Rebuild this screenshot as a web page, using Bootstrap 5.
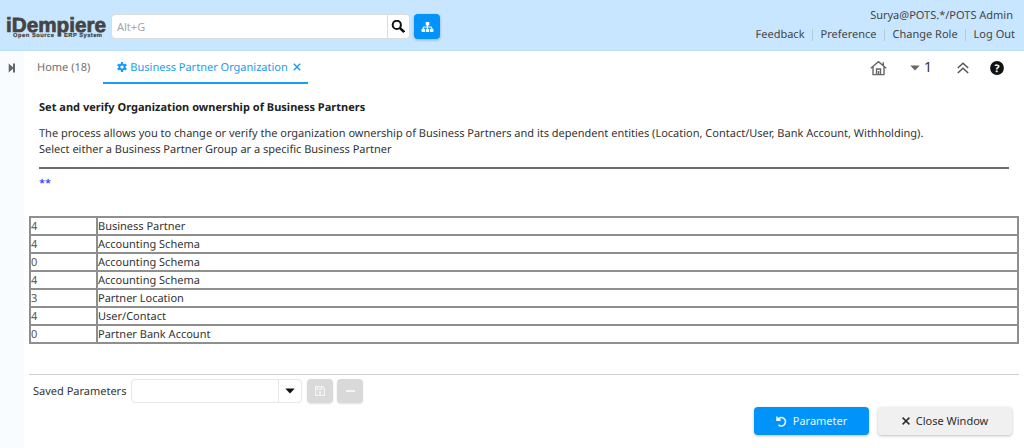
<!DOCTYPE html>
<html lang="en">
<head>
<meta charset="utf-8">
<meta name="viewport" content="width=device-width, initial-scale=1">
<title>iDempiere - Business Partner Organization</title>
<link href="https://cdn.jsdelivr.net/npm/bootstrap@5.3.0/dist/css/bootstrap.min.css" rel="stylesheet">
<style>
body{font-family:"Noto Sans",sans-serif;font-size:11px;line-height:16px;color:#333;height:448px;overflow:hidden;background:#fff;text-rendering:geometricPrecision}
svg{display:block;flex:none}
.topbar{height:51px;background:#c8e6ff;border-bottom:1px solid #b9e0fb}
.logo{margin-left:6px}
.search{width:299px;height:25px;margin:14px 0 0 4px}
.search .form-control{font-size:11px;line-height:16px;padding:0 5px;border:1px solid #dcdcdc;border-radius:4px 0 0 4px}
.search .form-control::placeholder{color:#a8a8a8;opacity:1}
.search-btn{width:24px;background:#fff;border:1px solid #dcdcdc;border-left:0;border-radius:0 4px 4px 0}
.tree-btn{width:26px;height:25px;margin:14px 0 0 4px;background:#0093f9;border-radius:4px;box-shadow:0 1px 3px rgba(0,0,0,.25)}
.user-area{color:#444;padding:8px 9px 0 0}
.user-area .who{padding-right:2px}
.user-area .links{margin-top:3px}
.user-area .links span+span{border-left:1px solid #b4cbdd;line-height:12px;margin-left:7px;padding-left:8px}
.side{width:24px;background:#f8fcff;padding:12px 0 0 8px}
.tabs{height:33px}
.tab-home{color:#707070;margin:9px 0 0 13px}
.tab-active{color:#1a9bf5;width:205px;margin-left:13px;padding:9px 0 0 14px;border-bottom:2px solid #1a9bf5}
.tools{padding:1px 20px 0 0}
.info{margin:16px 15px 0 15px}
.info h1{font-size:11px;line-height:16px;font-weight:700;color:#222;margin:0 0 10px;letter-spacing:.015px}
.rule{height:2px;background:#6c6c6c;margin-top:9px}
.stars{color:#2020ff;margin-top:7px}
.result{width:990px;margin:24px 0 0 5px;border-collapse:collapse}
.result td{border:2px solid #8f8f8f;height:18px;padding:2px 0 0;line-height:14px}
.result td:first-child{width:67px;color:#555}
.bottom{margin:30px 5px 0;border-top:1px solid #d0d0d0;padding:4px 0 0 4px}
.bottom .caption-text{padding-top:2px}
.combo{width:171px;height:24px;margin-left:5px;border:1px solid #e6e6e6;border-radius:4px}
.combo i{width:23px;border-left:1px solid #e6e6e6}
.mini{width:26px;height:24px;background:#d9d9d9;border-radius:4px;margin-left:5px;box-shadow:0 1px 2px rgba(0,0,0,.12)}
.mini+.mini{margin-left:4px}
.actions{gap:9px;padding-right:12px;margin-top:4px}
.act{height:28px;border:0;border-radius:4px;font-size:11px;line-height:16px;padding:0;box-shadow:0 1px 3px rgba(0,0,0,.25)}
.act svg{margin-right:6px}
.act.go,.act.go:hover{width:115px;background:#0093f9;color:#e8f6ff}
.act.end,.act.end:hover{width:134px;background:#f0f0f0;color:#2e2e2e}
</style>
</head>
<body>
<header class="topbar d-flex align-items-start">
  <svg class="logo" width="101" height="51" viewBox="0 0 101 51">
    <text x="0" y="31.5" font-family="Liberation Sans" font-weight="700" font-size="20.5" fill="#444" stroke="#444" stroke-width=".7" textLength="100" lengthAdjust="spacingAndGlyphs">iDempiere</text>
    <text x="7" y="36.5" font-family="Liberation Sans" font-weight="700" font-size="5.8" fill="#444" textLength="41" stroke="#444" stroke-width=".2" lengthAdjust="spacing">Open Source</text>
    <text x="58" y="36.5" font-family="Liberation Sans" font-weight="700" font-size="5.8" fill="#444" textLength="38" stroke="#444" stroke-width=".2" lengthAdjust="spacing">ERP System</text>
  </svg>
  <div class="search d-flex">
    <input class="form-control flex-fill" placeholder="Alt+G" aria-label="Search">
    <button class="search-btn p-0 d-flex align-items-center justify-content-center" aria-label="Find"><svg width="14" height="14" viewBox="0 0 14 14" fill="none" stroke="#111"><circle cx="5.8" cy="4.9" r="4.1" stroke-width="2"/><path d="M9 8.1 13.2 12.1" stroke-width="2.6"/></svg></button>
  </div>
  <button class="tree-btn border-0 p-0 d-flex align-items-center justify-content-center" aria-label="Menu"><svg width="13" height="12" viewBox="0 0 13 12"><g fill="#fff"><rect x="4.7" y="1" width="3.6" height="3.4" rx=".5"/><rect x=".6" y="7.7" width="3.4" height="3.3" rx=".5"/><rect x="4.8" y="7.7" width="3.4" height="3.3" rx=".5"/><rect x="9" y="7.7" width="3.4" height="3.3" rx=".5"/></g><path d="M6.5 4v4M2.3 8V6h8.4v2" fill="none" stroke="#fff"/></svg></button>
  <div class="user-area ms-auto text-end">
    <div class="who">Surya@POTS.*/POTS Admin</div>
    <div class="links d-flex align-items-center"><span>Feedback</span><span>Preference</span><span>Change Role</span><span>Log Out</span></div>
  </div>
</header>
<div class="d-flex" style="height:397px">
  <aside class="side flex-shrink-0"><svg width="8" height="10" viewBox="0 0 8 10" fill="#666"><path d="M.7.5 5 4.2V.5H7v9H5V5.8L.7 9.5z"/></svg></aside>
  <main class="flex-fill">
    <div class="tabs d-flex">
      <div class="tab-home">Home (18)</div>
      <div class="tab-active d-flex align-items-start">
        <svg width="10" height="10" viewBox="0 0 10 10" style="margin-top:2px" fill="none" stroke="#1a9bf5"><circle cx="5" cy="5" r="2.6" stroke-width="2"/><path d="M5 0v2M5 8v2M.7 2.5l1.7 1M7.6 6.5l1.7 1M.7 7.5l1.7-1M7.6 3.5l1.7-1" stroke-width="2.2"/></svg>
        <span class="text-nowrap" style="margin-left:3px">Business Partner Organization</span>
        <svg width="8" height="8" viewBox="0 0 8 8" style="margin:3px 0 0 5px" stroke="#1a9bf5" stroke-width="1.4"><path d="M.8.8 7.2 7.2M7.2.8.8 7.2"/></svg>
      </div>
      <div class="tools ms-auto d-flex align-items-center">
        <svg width="17" height="16" viewBox="0 0 17 16" fill="none" stroke="#666" stroke-width="1.4"><path d="M.8 8.3 8.5 1.6 16.2 8.3M13.3 5.5V2.2M3 7v7.6h11V7M6.5 14.5V9h4v5.5M8.5 11v3.5"/></svg>
        <svg width="10" height="6" viewBox="0 0 10 6" style="margin-left:23px"><path d="M.3.5h9.4L5 5.5z" fill="#666"/></svg>
        <span class="count" style="font-size:14px;margin-left:4px">1</span>
        <svg width="12" height="12" viewBox="0 0 12 12" style="margin-left:25px" fill="none" stroke="#555" stroke-width="1.5"><path d="M.8 6 6 1.2 11.2 6M.8 11 6 6.2 11.2 11"/></svg>
        <svg width="14" height="14" viewBox="0 0 14 14" style="margin-left:21px"><circle cx="7" cy="7" r="6.9" fill="#111"/><text x="7" y="10.8" text-anchor="middle" font-family="Noto Sans" font-weight="700" font-size="10.5" fill="#fff">?</text></svg>
      </div>
    </div>
    <section class="info">
      <h1>Set and verify Organization ownership of Business Partners</h1>
      <div class="text-nowrap">The process allows you to change or verify the organization ownership of Business Partners and its dependent entities (Location, Contact/User, Bank Account, Withholding).</div>
      <div>Select either a Business Partner Group ar a specific Business Partner</div>
      <div class="rule"></div>
      <div class="stars">**</div>
    </section>
    <table class="result">
      <tr><td>4</td><td>Business Partner</td></tr>
      <tr><td>4</td><td>Accounting Schema</td></tr>
      <tr><td>0</td><td>Accounting Schema</td></tr>
      <tr><td>4</td><td>Accounting Schema</td></tr>
      <tr><td>3</td><td>Partner Location</td></tr>
      <tr><td>4</td><td>User/Contact</td></tr>
      <tr><td>0</td><td>Partner Bank Account</td></tr>
    </table>
    <div class="bottom d-flex align-items-center">
      <span class="caption-text">Saved Parameters</span>
      <div class="combo d-flex justify-content-end"><i class="d-flex align-items-center justify-content-center"><svg width="10" height="6" viewBox="0 0 10 6"><path d="M.3.5h9.4L5 5.5z" fill="#111"/></svg></i></div>
      <div class="mini d-flex align-items-center justify-content-center"><svg width="10" height="10" viewBox="0 0 10 10" fill="none" stroke="#f5f5f5"><path d="M.6.6h7l1.8 1.8v7H.6zM2.5.8v2.7h4V.8" stroke-width="1.2"/><circle cx="5" cy="6.5" r="1" fill="#f5f5f5"/></svg></div>
      <div class="mini d-flex align-items-center justify-content-center"><svg width="9" height="2"><rect width="9" height="2" fill="#f5f5f5"/></svg></div>
    </div>
    <div class="actions d-flex justify-content-end">
      <button class="act go btn d-flex align-items-center justify-content-center"><svg width="11" height="11" viewBox="0 0 11 11" fill="none" stroke="#e8f6ff" stroke-width="1.6"><path d="M1.8 3.4A4.2 4.2 0 1 1 2.5 8.9M1 .5v3.6h3.7"/></svg><span>Parameter</span></button>
      <button class="act end btn d-flex align-items-center justify-content-center"><svg width="8" height="8" viewBox="0 0 8 8" stroke="#2e2e2e" stroke-width="1.5"><path d="M.6.6 7.4 7.4M7.4.6.6 7.4"/></svg><span>Close Window</span></button>
    </div>
  </main>
</div>
<script src="https://cdn.jsdelivr.net/npm/bootstrap@5.3.0/dist/js/bootstrap.bundle.min.js"></script>
</body>
</html>
